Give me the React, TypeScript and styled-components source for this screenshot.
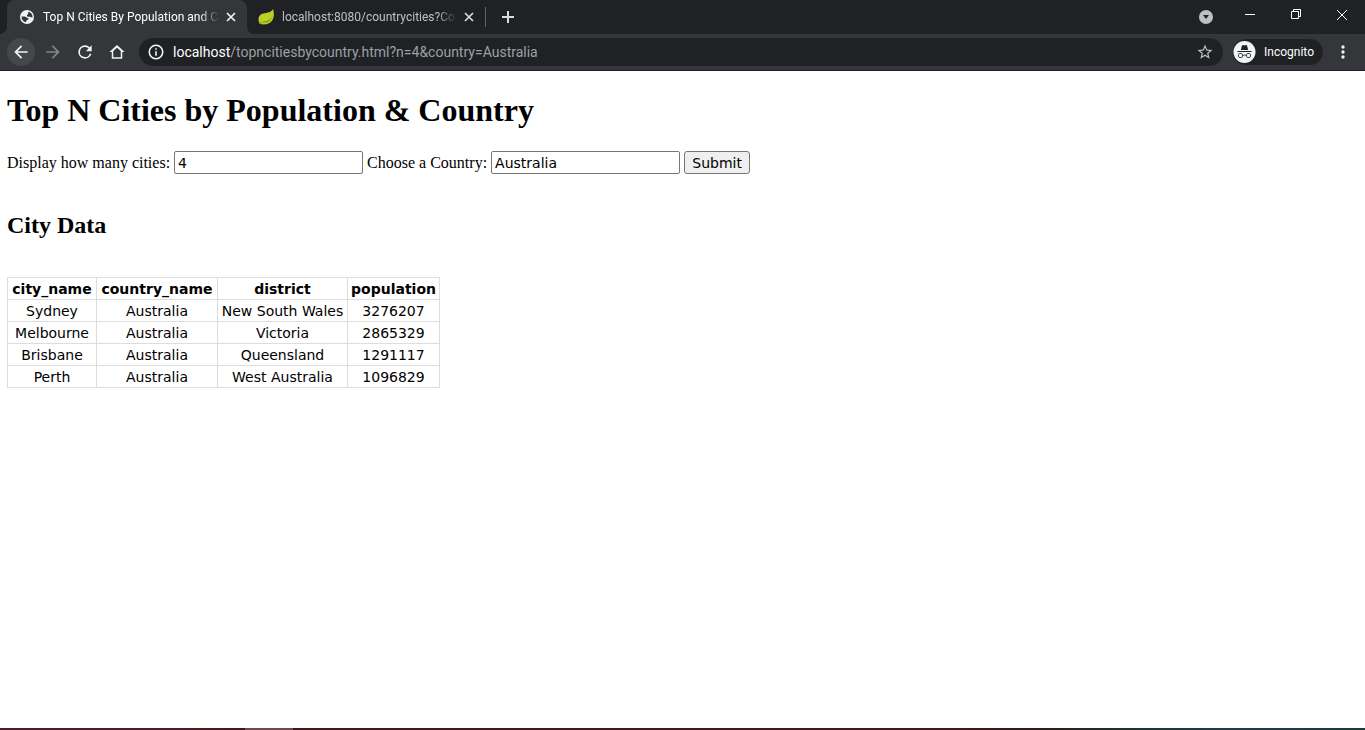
import React from 'react';
import styled, { createGlobalStyle } from 'styled-components';

const GlobalStyle = createGlobalStyle`
  * { box-sizing: border-box; }
  body { margin: 0; background: #fff; color: #000; }
`;

const Screen = styled.div`
  display: flex;
  flex-direction: column;
  min-height: 100vh;
`;

const Chrome = styled.header`
  background: #202124;
  color: #fff;
  font-family: Roboto, "Open Sans", sans-serif;
`;

const TabStrip = styled.div`
  display: flex;
  height: 34px;
  padding-left: 7px;
`;

const Tab = styled.div<{ $active?: boolean }>`
  position: relative;
  display: flex;
  align-items: center;
  width: ${(p) => (p.$active ? 240 : 238)}px;
  padding: 0 8px 0 ${(p) => (p.$active ? 12 : 11)}px;
  gap: 4px;
  border-radius: 8px 8px 0 0;
  background: ${(p) => (p.$active ? '#35363a' : 'transparent')};
  color: ${(p) => (p.$active ? '#fff' : '#bdc1c6')};

  ${(p) => p.$active && `
    &::before, &::after {
      content: '';
      position: absolute;
      bottom: 0;
      width: 8px;
      height: 8px;
    }
    &::before { left: -8px; background: radial-gradient(circle at 0 0, transparent 8px, #35363a 8px); }
    &::after { right: -8px; background: radial-gradient(circle at 100% 0, transparent 8px, #35363a 8px); }
  `}
`;

const TabTitle = styled.span`
  flex: 1;
  padding-left: 4px;
  overflow: hidden;
  white-space: nowrap;
  font-size: 12px;
  line-height: 16px;
  mask-image: linear-gradient(to right, #000 calc(100% - 20px), transparent);
`;

const IconButton = styled.button<{ $size?: number; $round?: boolean; $tone?: string }>`
  display: flex;
  flex: none;
  align-items: center;
  justify-content: center;
  width: ${(p) => p.$size ?? 28}px;
  height: ${(p) => p.$size ?? 28}px;
  padding: 0;
  border: 0;
  border-radius: 50%;
  background: ${(p) => (p.$round ? '#46474b' : 'transparent')};
  color: ${(p) => p.$tone ?? '#f1f3f4'};
`;

const Separator = styled.span`
  align-self: center;
  width: 1px;
  height: 20px;
  background: #5f6368;
`;

const NewTab = styled(IconButton)`
  align-self: center;
  margin-left: 8px;
`;

const WindowControls = styled.div`
  display: flex;
  margin-left: auto;
`;

const WindowButton = styled.button`
  display: flex;
  align-items: center;
  justify-content: center;
  width: 46px;
  height: 29px;
  padding: 0;
  border: 0;
  background: transparent;
  color: #fff;
`;

const TabSearch = styled(WindowButton)`
  width: 42px;
  height: 34px;
`;

const Toolbar = styled.div`
  display: flex;
  align-items: center;
  height: 37px;
  padding: 0 8px 0 7px;
  gap: 4px;
  background: #35363a;
  border-bottom: 1px solid #202124;
`;

const AddressBar = styled.div`
  display: flex;
  flex: 1;
  align-items: center;
  height: 28px;
  margin: 0 6px 0 4px;
  padding: 0 4px 0 8px;
  border-radius: 14px;
  background: #202124;
`;

const Url = styled.span`
  flex: 1;
  padding-left: 8px;
  color: #9aa0a6;
  font-size: 14px;
  line-height: 20px;
  white-space: nowrap;
`;

const Host = styled.span`
  color: #fff;
`;

const Incognito = styled.div`
  display: flex;
  align-items: center;
  height: 26px;
  margin-right: 2px;
  padding-right: 9px;
  gap: 7px;
  border-radius: 13px;
  background: #202124;
  font-size: 12px;
  line-height: 16px;
`;

const Page = styled.main`
  flex: 1;
  padding: 20px 7px;
  font-family: "Liberation Serif", "Times New Roman", serif;
  font-size: 16px;
`;

const Title = styled.h1`
  margin: 0 0 22px;
  font-size: 32px;
  line-height: 38px;
`;

const Subtitle = styled.h2`
  margin: 35px 0 36px;
  font-size: 24px;
  line-height: 32px;
`;

const Form = styled.form`
  display: flex;
  flex-wrap: wrap;
  align-items: center;
  gap: 4px;
`;

const TextField = styled.input`
  width: 189px;
  height: 23px;
  padding: 1px 3px;
  border: 1px solid #767676;
  border-radius: 2px;
  background: #fff;
  color: #000;
  font-family: "DejaVu Sans", Verdana, sans-serif;
  font-size: 14px;
`;

const SubmitButton = styled.button`
  width: 66px;
  height: 23px;
  padding: 0;
  border: 1px solid #767676;
  border-radius: 3px;
  background: #efefef;
  color: #000;
  font-family: "DejaVu Sans", Verdana, sans-serif;
  font-size: 14px;
`;

const DataTable = styled.table`
  border-collapse: collapse;
  font-family: "DejaVu Sans", Verdana, sans-serif;
  font-size: 14px;
  line-height: 16px;
  text-align: center;

  th, td {
    padding: 3px 3px 2px;
    border: 1px solid #ddd;
  }
`;

const Column = styled.col<{ $width: number }>`
  width: ${(p) => p.$width}px;
`;

const TaskbarEdge = styled.div`
  display: flex;
  height: 2px;
  background: linear-gradient(to right, #4a1c2c 0%, #4a1c2c 13%, #42171b 18%, #42171b 70%, #2b1d1a 76%, #1d3632 84%, #223b49 90%, #1c3a38 100%);
`;

const ActiveApp = styled.span`
  width: 48px;
  margin-left: 245px;
  background: #6f474d;
`;

const cities = [
  ['Sydney', 'Australia', 'New South Wales', '3276207'],
  ['Melbourne', 'Australia', 'Victoria', '2865329'],
  ['Brisbane', 'Australia', 'Queensland', '1291117'],
  ['Perth', 'Australia', 'West Australia', '1096829'],
];

const columns = [
  { name: 'city_name', width: 89 },
  { name: 'country_name', width: 121 },
  { name: 'district', width: 130 },
  { name: 'population', width: 92 },
];

const MaterialIcon = ({ d, size = 20 }: { d: string; size?: number }) => (
  <svg width={size} height={size} viewBox="0 0 24 24" fill="currentColor" aria-hidden="true">
    <path d={d} />
  </svg>
);

const icons = {
  back: 'M20 11H7.83l5.59-5.59L12 4l-8 8 8 8 1.41-1.41L7.83 13H20v-2z',
  forward: 'M12 4l-1.41 1.41L16.17 11H4v2h12.17l-5.58 5.59L12 20l8-8z',
  reload: 'M17.65 6.35A7.96 7.96 0 0 0 12 4a8 8 0 1 0 7.73 10h-2.08A6 6 0 1 1 12 6c1.66 0 3.14.69 4.22 1.78L13 11h7V4l-2.35 2.35z',
  home: 'M12 2.6L1.8 12H5v9h14v-9h3.2L12 2.6zM17 19H7v-8.2l5-4.6 5 4.6V19z',
  info: 'M11 7h2v2h-2zm0 4h2v6h-2zm1-9a10 10 0 1 0 0 20 10 10 0 0 0 0-20zm0 18a8 8 0 1 1 0-16 8 8 0 0 1 0 16z',
  star: 'M22 9.24l-7.19-.62L12 2 9.19 8.63 2 9.24l5.46 4.73L5.82 21 12 17.27 18.18 21l-1.63-7.03L22 9.24zM12 15.4l-3.76 2.27 1-4.28-3.32-2.88 4.38-.38L12 6.1l1.71 4.04 4.38.38-3.32 2.88 1 4.28L12 15.4z',
  more: 'M12 8a2 2 0 1 0 0-4 2 2 0 0 0 0 4zm0 2a2 2 0 1 0 0 4 2 2 0 0 0 0-4zm0 6a2 2 0 1 0 0 4 2 2 0 0 0 0-4z',
};

const Globe = () => (
  <svg width="16" height="16" viewBox="0 0 16 16" aria-hidden="true">
    <circle cx="8" cy="8" r="7" fill="#f1f3f4" />
    <path d="M2.6 7.6c1.8-.3 4-.3 4.8.6.6.8 1.700.5 2.100 1.400.4 1-.8 1.300-1.700 1.700-.8.400-.600 1.300-.800 2-2.700-.400-4.600-2.700-4.400-5.700zM9.300 2.700c2 .4 3.600 1.800 4.100 3.800.2 1 .1 1.700-.1 2.300-.7-.2-1.300-1-2.300-1-1.200 0-2.600.2-3-.9-.3-1 .5-1.500 1-2 .5-.600.100-1.500.300-2.200z" fill="#35363a" />
  </svg>
);

const Leaf = () => (
  <svg width="16" height="16" viewBox="0 0 17 17" aria-hidden="true">
    <path d="M16 0C17.800 6 16.800 11.700 13 14.400c-3.400 2.500-8.500 2.600-11.400 1C-.3 11.800 0 7 4.400 5.100 8 3.700 13.200 4.800 16 0z" fill="#bed022" />
    <path d="M15.600 7c-1.700 4.700-6.600 6.600-13 6.800 4.800 1.600 11 .600 13-6.800z" fill="#65972b" />
    <circle cx="2.600" cy="15" r="1.200" fill="#7ba51d" />
  </svg>
);

const Cross = ({ size = 10, weight = 1.7 }: { size?: number; weight?: number }) => (
  <svg width={size} height={size} viewBox={`0 0 ${size} ${size}`} stroke="currentColor" strokeWidth={weight} aria-hidden="true">
    <path d={`M1 1L${size - 1} ${size - 1}M${size - 1} 1L1 ${size - 1}`} />
  </svg>
);

const Spy = () => (
  <svg width="24" height="24" viewBox="0 0 24 24" aria-hidden="true">
    <circle cx="11.500" cy="12" r="11" fill="#f1f3f4" />
    <path d="M7.800 10l1.200-4.500.9-.5 1.600.5 1.600-.5.9.5 1.200 4.500z" fill="#202124" />
    <path d="M4.500 11.500h14" stroke="#202124" />
    <g fill="none" stroke="#3c4043">
      <rect x="5.500" y="13.500" width="4" height="4" rx="1.300" />
      <rect x="13.500" y="13.500" width="4" height="4" rx="1.300" />
      <path d="M9.500 15.500q2-1 4 0" />
    </g>
  </svg>
);

export default function App() {
  return (
    <Screen>
      <GlobalStyle />
      <Chrome>
        <TabStrip>
          <Tab $active>
            <Globe />
            <TabTitle>Top N Cities By Population and Co</TabTitle>
            <IconButton $size={16} aria-label="Close tab"><Cross /></IconButton>
          </Tab>
          <Tab>
            <Leaf />
            <TabTitle>localhost:8080/countrycities?Cou</TabTitle>
            <IconButton $size={16} $tone="#dadce0" aria-label="Close tab"><Cross /></IconButton>
          </Tab>
          <Separator />
          <NewTab aria-label="New tab" $tone="#dadce0">
            <svg width="12" height="12" viewBox="0 0 12 12" stroke="currentColor" strokeWidth="2"><path d="M6 0v12M0 6h12" /></svg>
          </NewTab>
          <WindowControls>
            <TabSearch aria-label="Search tabs">
              <svg width="14" height="14" viewBox="0 0 14 14"><circle cx="7" cy="7" r="7" fill="#bdc1c6" /><path d="M4 5h6L7 9z" fill="#202124" /></svg>
            </TabSearch>
            <WindowButton aria-label="Minimize">
              <svg width="10" height="11" viewBox="0 0 10 11" stroke="currentColor"><path d="M0 5.500h10" /></svg>
            </WindowButton>
            <WindowButton aria-label="Restore">
              <svg width="11" height="11" viewBox="0 0 11 11" fill="none" stroke="currentColor"><path d="M.5 2.500h7v7h-7zM2.500 2.500v-2h7v7h-2" /></svg>
            </WindowButton>
            <WindowButton aria-label="Close"><Cross size={12} weight={1} /></WindowButton>
          </WindowControls>
        </TabStrip>
        <Toolbar>
          <IconButton $round aria-label="Back"><MaterialIcon d={icons.back} /></IconButton>
          <IconButton $tone="#85868a" aria-label="Forward"><MaterialIcon d={icons.forward} /></IconButton>
          <IconButton aria-label="Reload"><MaterialIcon d={icons.reload} /></IconButton>
          <IconButton aria-label="Home"><MaterialIcon d={icons.home} size={18} /></IconButton>
          <AddressBar>
            <MaterialIcon d={icons.info} size={18} />
            <Url><Host>localhost</Host>/topncitiesbycountry.html?n=4&amp;country=Australia</Url>
            <IconButton $tone="#bdc1c6" aria-label="Bookmark"><MaterialIcon d={icons.star} size={18} /></IconButton>
          </AddressBar>
          <Incognito><Spy />Incognito</Incognito>
          <IconButton aria-label="Menu"><MaterialIcon d={icons.more} size={20} /></IconButton>
        </Toolbar>
      </Chrome>
      <Page>
        <Title>Top N Cities by Population &amp; Country</Title>
        <Form onSubmit={(e) => e.preventDefault()}>
          <label htmlFor="count">Display how many cities:</label>
          <TextField id="count" type="text" defaultValue="4" />
          <label htmlFor="country">Choose a Country:</label>
          <TextField id="country" type="text" defaultValue="Australia" />
          <SubmitButton type="submit">Submit</SubmitButton>
        </Form>
        <Subtitle>City Data</Subtitle>
        <DataTable>
          <colgroup>
            {columns.map((c) => <Column key={c.name} $width={c.width} />)}
          </colgroup>
          <thead>
            <tr>{columns.map((c) => <th key={c.name} scope="col">{c.name}</th>)}</tr>
          </thead>
          <tbody>
            {cities.map((row) => (
              <tr key={row[0]}>{row.map((cell) => <td key={cell}>{cell}</td>)}</tr>
            ))}
          </tbody>
        </DataTable>
      </Page>
      <TaskbarEdge><ActiveApp /></TaskbarEdge>
    </Screen>
  );
}
